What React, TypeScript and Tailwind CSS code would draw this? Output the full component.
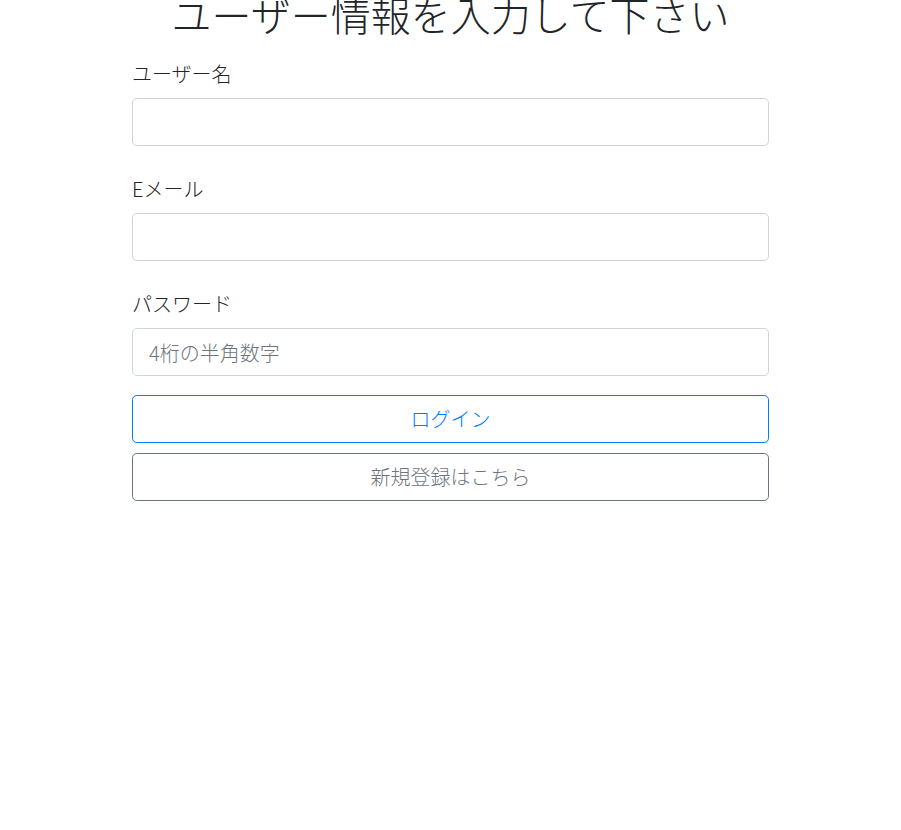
export default function App() {
  const fields = [
    { label: 'ユーザー名', type: 'text', placeholder: '' },
    { label: 'Eメール', type: 'email', placeholder: '' },
    { label: 'パスワード', type: 'password', placeholder: '4桁の半角数字' },
  ];

  return (
    <div
      className="min-h-[830px] bg-white text-[#212529] font-light"
      style={{ fontFamily: '"Noto Sans CJK JP", "Noto Sans", sans-serif' }}
    >
      <div className="w-[637px] mx-auto">
        <h1 className="-mt-[10px] mb-[12px] text-center text-[40px] leading-[48px] font-light">
          ユーザー情報を入力して下さい
        </h1>

        <form className="flex flex-col gap-[19px]" onSubmit={(e) => e.preventDefault()}>
          {fields.map((f) => (
            <div key={f.label} className="flex flex-col">
              <label className="py-[9px] text-[20px] leading-[30px]">{f.label}</label>
              <input
                type={f.type}
                placeholder={f.placeholder}
                className="h-[48px] w-full rounded-[4.8px] border border-[#ced4da] px-4 text-[20px] placeholder:text-[#6c757d] outline-none"
              />
            </div>
          ))}

          <div className="flex flex-col gap-[10px]">
            <button
              type="submit"
              className="h-[48px] w-full rounded-[4.8px] border border-[#007bff] text-[20px] text-[#007bff] font-light"
            >
              ログイン
            </button>
            <button
              type="button"
              className="h-[48px] w-full rounded-[4.8px] border border-[#6c757d] text-[20px] text-[#6c757d] font-light"
            >
              新規登録はこちら
            </button>
          </div>
        </form>
      </div>
    </div>
  );
}
